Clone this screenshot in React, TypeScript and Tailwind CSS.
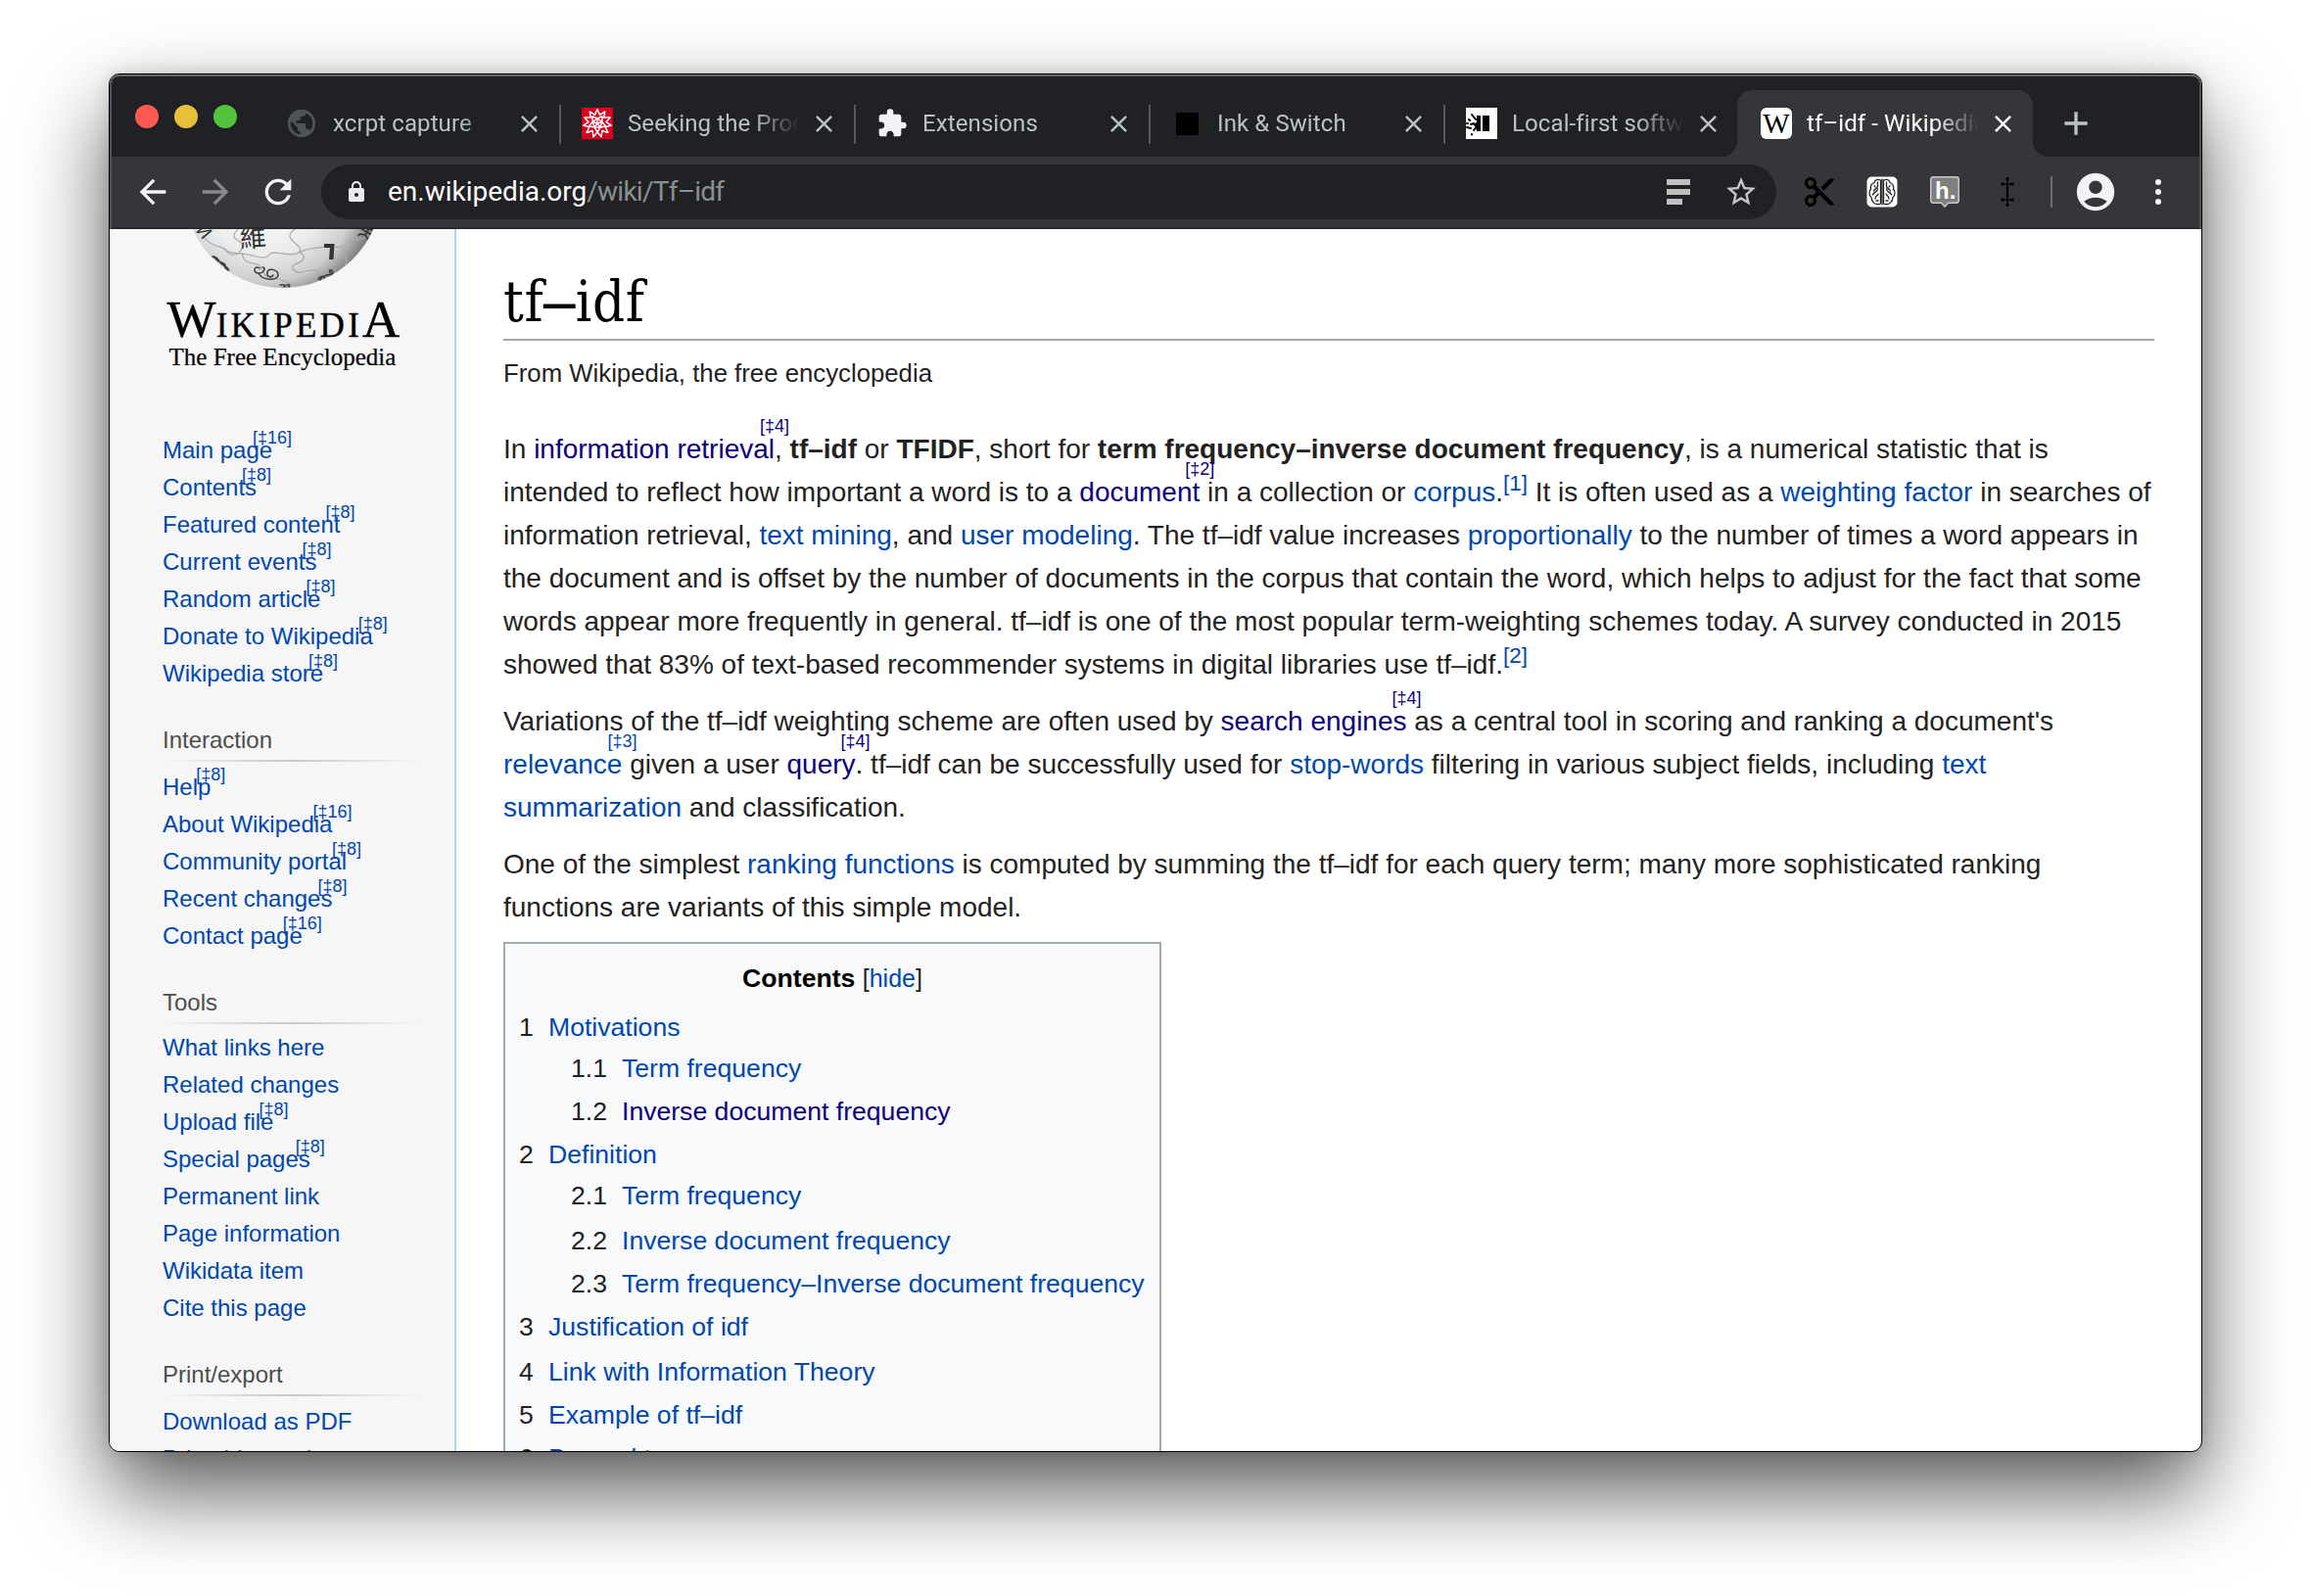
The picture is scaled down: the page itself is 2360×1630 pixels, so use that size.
import React from "react";
import {
  MdAccountCircle,
  MdAdd,
  MdArrowBack,
  MdArrowForward,
  MdClose,
  MdContentCut,
  MdExtension,
  MdLock,
  MdPublic,
  MdRefresh,
  MdStarBorder,
} from "react-icons/md";

/* ---------- favicons ---------- */

function polar(r: number, deg: number) {
  const a = ((deg - 90) * Math.PI) / 180;
  return [16 + r * Math.cos(a), 16 + r * Math.sin(a)];
}

function SpikeyIcon() {
  const star: string[] = [];
  const inner: string[] = [];
  const spokes: string[] = [];
  for (let i = 0; i < 11; i++) {
    const step = 360 / 11;
    const tip = polar(14.4, i * step);
    const dip = polar(9, i * step + step / 2);
    star.push(tip.join(","), dip.join(","));
  }
  for (let i = 0; i < 5; i++) {
    const a = polar(5, i * 72);
    const b = polar(9, i * 72 + 36);
    const c = polar(9, i * 72 - 36);
    inner.push(a.join(","));
    spokes.push(`M${c.join(" ")}L${a.join(" ")}L${b.join(" ")}M16 16L${a.join(" ")}`);
  }
  return (
    <svg width="32" height="32" viewBox="0 0 32 32">
      <rect width="32" height="32" fill="#d9001f" />
      <g fill="none" stroke="#fff" strokeWidth="1.5" strokeLinejoin="round">
        <polygon points={star.join(" ")} />
        <polygon points={inner.join(" ")} />
        <path d={spokes.join("")} />
      </g>
    </svg>
  );
}

function LocalFirstIcon() {
  return (
    <svg width="32" height="32" viewBox="0 0 32 32">
      <rect width="32" height="32" fill="#fff" />
      <path d="M17 8h7v16h-7z" fill="#000" />
      <path d="M11 8h4v16h-4l-1-4-3-3 4-2z" fill="#000" />
      <g stroke="#000" strokeWidth="2" strokeLinecap="round">
        <path d="M6 7l4 5M3 12l1 1M1 20l4 1M6 27l0 .5M8 23l3-4M1 16l1 0M5 17l3-1" />
      </g>
    </svg>
  );
}

function WikiIcon() {
  return (
    <div className="flex size-8 items-center justify-center overflow-hidden rounded-[6px] bg-white font-['Liberation_Serif',serif] text-[29px] leading-8 text-black">
      W
    </div>
  );
}

/* ---------- extension icons ---------- */

function BrainIcon() {
  return (
    <svg width="32" height="32" viewBox="0 0 32 32">
      <rect x="0.5" y="0.5" width="31" height="31" rx="5" fill="#fff" />
      <g fill="none" stroke="#222" strokeWidth="1.3" strokeLinecap="round">
        <path d="M16 3v26M14.5 4C10 2 8 5 8 6.500C4.500 8 4 11 4.500 13C2 16 3 20 5 21.500C5 26 9 29 12 28.500C14 29 14.500 28 14.500 27V4z" />
        <path d="M17.500 4C22 2 24 5 24 6.500C27.500 8 28 11 27.500 13C30 16 29 20 27 21.500C27 26 23 29 20 28.500C18 29 17.500 28 17.500 27V4z" />
        <path d="M11.500 6v4c0 3-3 2-4 5M11.500 13c0 3-4 3-5 6M9 23c0-3 2-3 3-5M10 25h2M8 9.500l1 1.500" />
        <path d="M20.500 6v4c0 3 3 2 4 5M20.500 13c0 3 4 3 5 6M23 23c0-3-2-3-3-5M22 25h-2M24 9.500l-1 1.500" />
      </g>
    </svg>
  );
}

function HypothesisIcon() {
  return (
    <div className="relative h-8 w-[30px]">
      <svg width="30" height="32" viewBox="0 0 30 32">
        <path
          d="M3 .75h24a2.250 2.250 0 0 1 2.250 2.250v22A2.250 2.250 0 0 1 27 27.250h-8.500L15 31l-3.500-3.750H3A2.250 2.250 0 0 1 .75 25V3A2.250 2.250 0 0 1 3 .75z"
          fill="#7f7f7f"
          stroke="#c9c9c9"
          strokeWidth="1.500"
        />
      </svg>
      <span className="absolute left-[5px] top-[3px] font-['Liberation_Sans',sans-serif] text-[24px] font-bold leading-6 text-white">
        h.
      </span>
    </div>
  );
}

function DaggerIcon() {
  return (
    <svg width="14" height="30" viewBox="0 0 14 30">
      <path d="M7 2v26M2 7h10M2 23h10" stroke="#000" strokeWidth="1.400" />
      <path d="M7 12v6" stroke="#000" strokeWidth="2" />
      <g fill="#000">
        <circle cx="7" cy="1.800" r="1.700" />
        <circle cx="7" cy="28.200" r="1.700" />
        <circle cx="1.900" cy="7" r="1.700" />
        <circle cx="12.100" cy="7" r="1.700" />
        <circle cx="1.900" cy="23" r="1.700" />
        <circle cx="12.100" cy="23" r="1.700" />
        <circle cx="7" cy="11" r="1.500" />
        <circle cx="7" cy="19" r="1.500" />
      </g>
    </svg>
  );
}

/* ---------- tab strip ---------- */

type TabData = { title: string; icon: React.ReactNode; active?: boolean };

const tabs: TabData[] = [
  { title: "xcrpt capture", icon: <MdPublic className="-ml-[2px] size-[34px] shrink-0 text-[#505459]" /> },
  { title: "Seeking the Productive Life", icon: <SpikeyIcon /> },
  { title: "Extensions", icon: <MdExtension className="size-8 text-[#f1f3f4]" /> },
  { title: "Ink & Switch", icon: <div className="size-[23px] bg-black" /> },
  { title: "Local-first software", icon: <LocalFirstIcon /> },
  { title: "tf–idf - Wikipedia", icon: <WikiIcon />, active: true },
];

function ActiveTabShape() {
  return (
    <svg className="absolute -left-[18px] top-0" width="334" height="68" viewBox="0 0 334 68">
      <path d="M0 68C9 68 16 61 16 52V16C16 7 23 0 32 0H302C311 0 318 7 318 16V52C318 61 325 68 334 68z" fill="#35363a" />
    </svg>
  );
}

function Tab({ tab, divider }: { tab: TabData; divider: boolean }) {
  return (
    <div className={`relative flex h-[68px] w-[301px] shrink-0 items-center ${tab.active ? "text-white" : "text-[#bdc1c6]"}`}>
      {tab.active && <ActiveTabShape />}
      <div className="relative ml-[22px] flex size-8 items-center justify-center">{tab.icon}</div>
      <div className="relative ml-[15px] w-[176px] overflow-hidden whitespace-nowrap text-[24px] leading-8 tracking-[0.1px] [mask-image:linear-gradient(to_right,black_128px,transparent_176px)]">
        {tab.title}
      </div>
      <MdClose className="relative ml-[10px] size-[29px]" />
      {divider && <div className="absolute -right-px top-[15px] h-10 w-[2px] bg-[#55585c]" />}
    </div>
  );
}

function TabStrip() {
  return (
    <div className="flex h-[84px] items-end bg-[#202124]">
      <div className="ml-[26px] mt-[31px] flex gap-4 self-start">
        <div className="size-6 rounded-full bg-[#ff5a52]" />
        <div className="size-6 rounded-full bg-[#e6c03a]" />
        <div className="size-6 rounded-full bg-[#53c33c]" />
      </div>
      <div className="ml-[29px] flex">
        {tabs.map((t, i) => (
          <Tab key={t.title} tab={t} divider={i < 4} />
        ))}
      </div>
      <div className="ml-[23px] flex h-[68px] items-center text-[#bdc1c6]">
        <MdAdd className="size-[40px]" />
      </div>
    </div>
  );
}

/* ---------- toolbar ---------- */

function Toolbar() {
  return (
    <div className="flex h-[74px] items-center border-b-2 border-[#29292c] bg-[#35363a]">
      <div className="ml-6 flex gap-6">
        <MdArrowBack className="size-10 text-[#f1f3f4]" />
        <MdArrowForward className="size-10 text-[#88898b]" />
        <MdRefresh className="size-10 text-[#f1f3f4]" />
      </div>
      <div className="ml-6 flex h-14 w-[1486px] items-center rounded-full bg-[#202124]">
        <MdLock className="ml-6 size-6 text-[#e8eaed]" />
        <div className="ml-[20px] text-[28px] leading-10 tracking-[-0.75px] text-[#8c8e91]">
          <span className="tracking-normal text-white">en.wikipedia.org</span>/wiki/Tf–idf
        </div>
        <div className="ml-auto flex w-6 flex-col gap-1">
          <div className="h-[6px] w-6 bg-[#bfbfbf]" />
          <div className="h-[6px] w-6 bg-[#bfbfbf]" />
          <div className="h-[6px] w-4 bg-[#bfbfbf]" />
        </div>
        <MdStarBorder className="ml-[34px] mr-[18px] size-9 text-[#c4c4c4]" />
      </div>
      <div className="ml-3 flex">
        <div className="flex w-16 items-center justify-center">
          <MdContentCut className="size-9 text-black" />
        </div>
        <div className="flex w-16 items-center justify-center">
          <BrainIcon />
        </div>
        <div className="flex w-16 items-center justify-center">
          <HypothesisIcon />
        </div>
        <div className="flex w-16 items-center justify-center">
          <DaggerIcon />
        </div>
      </div>
      <div className="ml-3 h-8 w-[2px] bg-[#6b6d70]" />
      <MdAccountCircle className="ml-[21px] size-[46px] text-[#f1f3f4]" />
      <div className="ml-[38px] flex flex-col gap-1">
        <div className="size-[6px] rounded-full bg-[#f1f3f4]" />
        <div className="size-[6px] rounded-full bg-[#f1f3f4]" />
        <div className="size-[6px] rounded-full bg-[#f1f3f4]" />
      </div>
    </div>
  );
}

/* ---------- sidebar ---------- */

function PuzzleGlobe() {
  return (
    <svg className="ml-[73px] block shrink-0" width="210" height="62" viewBox="0 0 210 62">
      <defs>
        <radialGradient id="globe" gradientUnits="userSpaceOnUse" cx="84" cy="-40" r="118">
          <stop offset="0" stopColor="#ffffff" />
          <stop offset="0.55" stopColor="#ebecec" />
          <stop offset="0.8" stopColor="#cbcdcf" />
          <stop offset="1" stopColor="#77797b" />
        </radialGradient>
        <clipPath id="ball">
          <circle cx="104" cy="-41" r="101" />
        </clipPath>
      </defs>
      <circle cx="104" cy="-41" r="101" fill="url(#globe)" />
      <g clipPath="url(#ball)">
        <g fill="none" stroke="#a7a9ab" strokeWidth="1.200">
          <path d="M22 6c8 14 20 10 24 16s12 6 16-2-10-8-8-14 4-4 4-6" />
          <path d="M44 20c6 6 14 4 24 6s18 6 22 0 22 4 30-2-14-12-8-20 14-6 14-4" />
          <path d="M120 24c12-6 18-4 26-6s18 4 24-4 16 0 22-8" />
          <path d="M122 24c8 6 0 10-6 12s0 10 8 8 16-6 16 4 8 6 14 6" />
          <path d="M62 24c2 12 10 10 16 12s4 14 16 14 12 8 26 6" />
          <path d="M168 18c-6 8 4 10 0 18s-12 8-16 12" />
        </g>
        <g fill="none" stroke="#3a3c3e" strokeWidth="1.500" strokeLinecap="round">
          <path d="M80 40c-6-4-7 5-1 5s8-6 4-6M79 45c4 8 20 8 20 2s-10-8-11-3 4 6 6 3" />
          <path d="M32 28c6-1 6 6 10 8s8 6 6 6-4-3-3-5-7-3-9-6-4-2-4-3" />
          <path d="M140 51c3-4 8-3 6 0s-6 1-3-1 8-4 10-3 3-4 0-5 -1 5 2 3" />
          <path d="M101 57h4c2 0 2 2 0 2M108 57c3-1 4 2 1 2" />
        </g>
        <g fill="#303234" className="font-['Noto_Sans_CJK_TC','Liberation_Sans',sans-serif]">
          <text x="60" y="18" fontSize="27" transform="rotate(-4 74 10)">
            維
          </text>
          <text x="12" y="6" fontSize="18" transform="rotate(50 18 6)">
            И
          </text>
          <text x="186" y="12" fontSize="18" transform="rotate(-60 190 8)">
            Ж
          </text>
        </g>
        <path d="M146 15h10.500l-1 16h-4.500l1-12h-6z" fill="#303234" />
      </g>
    </svg>
  );
}

type Item = [label: string, mark?: string];
type Section = { title: string; gap: string; items: Item[] };

const mainLinks: Item[] = [
  ["Main page", "[‡16]"],
  ["Contents", "[‡8]"],
  ["Featured content", "[‡8]"],
  ["Current events", "[‡8]"],
  ["Random article", "[‡8]"],
  ["Donate to Wikipedia", "[‡8]"],
  ["Wikipedia store", "[‡8]"],
];

const sections: Section[] = [
  {
    title: "Interaction",
    gap: "mt-[7px]",
    items: [
      ["Help", "[‡8]"],
      ["About Wikipedia", "[‡16]"],
      ["Community portal", "[‡8]"],
      ["Recent changes", "[‡8]"],
      ["Contact page", "[‡16]"],
    ],
  },
  {
    title: "Tools",
    gap: "mt-[5px]",
    items: [
      ["What links here"],
      ["Related changes"],
      ["Upload file", "[‡8]"],
      ["Special pages", "[‡8]"],
      ["Permanent link"],
      ["Page information"],
      ["Wikidata item"],
      ["Cite this page"],
    ],
  },
  {
    title: "Print/export",
    gap: "mt-[7px]",
    items: [["Download as PDF"], ["Printable version"]],
  },
];

function LinkList({ items }: { items: Item[] }) {
  return (
    <ul>
      {items.map(([label, mark]) => (
        <li key={label} className="flex h-[38px] leading-[38px]">
          <a className="relative text-[#0047ae]">
            {label}
            {mark && (
              <span className="absolute -top-[3px] left-full -translate-x-1/2 whitespace-nowrap text-[18px] leading-[18px]">
                {mark}
              </span>
            )}
          </a>
        </li>
      ))}
    </ul>
  );
}

function Sidebar() {
  return (
    <aside className="flex w-[354px] shrink-0 flex-col border-r-2 border-[#a7d7f9] bg-[#f6f6f6] text-[24px]">
      <PuzzleGlobe />
      <div className="mt-[6px] flex h-[47px] shrink-0 items-baseline justify-center whitespace-nowrap pl-[3px] font-['Liberation_Serif',serif] leading-[48px] text-black [-webkit-text-stroke:0.4px_black]">
        <span className="text-[53px]">W</span>
        <span className="text-[35px] tracking-[3.3px]">IKIPEDI</span>
        <span className="text-[53px]">A</span>
      </div>
      <div className="shrink-0 pl-px text-center font-['Liberation_Serif',serif] text-[25px] leading-8 text-black [-webkit-text-stroke:0.2px_black]">
        The Free Encyclopedia
      </div>
      <nav className="mt-[60px] pl-[54px]">
        <LinkList items={mainLinks} />
        {sections.map((s) => (
          <section key={s.title} className="mt-[30px]">
            <h3 className="leading-[38px] text-[#4d4d4d]">{s.title}</h3>
            <div className="mt-px h-[2px] w-[264px] bg-linear-to-r from-[#f6f6f6] via-[#c3c8ce] to-[#f6f6f6]" />
            <div className={s.gap}>
              <LinkList items={s.items} />
            </div>
          </section>
        ))}
      </nav>
    </aside>
  );
}

/* ---------- article ---------- */

function A({ children, seen, mark }: { children: React.ReactNode; seen?: boolean; mark?: string }) {
  return (
    <a className={`relative ${seen ? "text-[#0b0080]" : "text-[#0047ae]"}`}>
      {children}
      {mark && (
        <span className="absolute -top-[17px] left-full -translate-x-1/2 whitespace-nowrap text-[18px] font-normal leading-[18px]">
          {mark}
        </span>
      )}
    </a>
  );
}

function Ref({ n }: { n: number }) {
  return <span className="relative -top-[11px] text-[22.4px] leading-none text-[#0047ae]">[{n}]</span>;
}

type TocRow = { no: string; text: string; h: string; sub?: boolean; seen?: boolean };

const toc: TocRow[] = [
  { no: "1", text: "Motivations", h: "h-[42px]" },
  { no: "1.1", text: "Term frequency", h: "h-[44px]", sub: true },
  { no: "1.2", text: "Inverse document frequency", h: "h-[44px]", sub: true, seen: true },
  { no: "2", text: "Definition", h: "h-[42px]" },
  { no: "2.1", text: "Term frequency", h: "h-[46px]", sub: true },
  { no: "2.2", text: "Inverse document frequency", h: "h-[44px]", sub: true },
  { no: "2.3", text: "Term frequency–Inverse document frequency", h: "h-[44px]", sub: true },
  { no: "3", text: "Justification of idf", h: "h-[46px]" },
  { no: "4", text: "Link with Information Theory", h: "h-[44px]" },
  { no: "5", text: "Example of tf–idf", h: "h-[44px]" },
  { no: "6", text: "Beyond terms", h: "h-[44px]" },
];

function Article() {
  return (
    <main className="w-[1734px] shrink-0 whitespace-nowrap pl-12 pt-10 text-[28px] leading-[44px] text-[#222222]">
      <h1 className="h-[74px] border-b-2 border-[#a2a9b1] font-['DejaVu_Serif',serif] text-[57.6px] leading-[70px] tracking-[0.6px] text-black [font-stretch:condensed]">
        tf<span className="font-['Liberation_Serif',serif] text-[64px] font-bold leading-none">–</span>idf
      </h1>
      <div className="mt-[13px] text-[25.76px] leading-10">From Wikipedia, the free encyclopedia</div>
      <p className="mt-[36px]">
        In <A seen mark="[‡4]">information retrieval</A>, <b>tf–idf</b> or <b>TFIDF</b>, short for{" "}
        <b>term frequency–inverse document frequency</b>, is a numerical statistic that is
        <br />
        intended to reflect how important a word is to a <A seen mark="[‡2]">document</A> in a collection or{" "}
        <A>corpus</A>.<Ref n={1} /> It is often used as a <A>weighting factor</A> in searches of
        <br />
        information retrieval, <A>text mining</A>, and <A>user modeling</A>. The tf–idf value increases{" "}
        <A>proportionally</A> to the number of times a word appears in
        <br />
        the document and is offset by the number of documents in the corpus that contain the word, which helps to
        adjust for the fact that some
        <br />
        words appear more frequently in general. tf–idf is one of the most popular term-weighting schemes today. A
        survey conducted in 2015
        <br />
        showed that 83% of text-based recommender systems in digital libraries use tf–idf.
        <Ref n={2} />
      </p>
      <p className="mt-[14px]">
        Variations of the tf–idf weighting scheme are often used by <A seen mark="[‡4]">search engines</A> as a central
        tool in scoring and ranking a document's
        <br />
        <A mark="[‡3]">relevance</A> given a user <A seen mark="[‡4]">query</A>. tf–idf can be successfully used for{" "}
        <A>stop-words</A> filtering in various subject fields, including <A>text</A>
        <br />
        <A>summarization</A> and classification.
      </p>
      <p className="mt-[14px]">
        One of the simplest <A>ranking functions</A> is computed by summing the tf–idf for each query term; many more
        sophisticated ranking
        <br />
        functions are variants of this simple model.
      </p>
      <div className="mt-[13px] w-[672px] border-2 border-[#a2a9b1] bg-[#f8f9fa] pt-[13px] text-[26.6px]">
        <div className="text-center">
          <b className="text-black">Contents</b> <span className="text-[25px]">[<A>hide</A>]</span>
        </div>
        <ul className="mt-[6px]">
          {toc.map((r) => (
            <li key={r.no} className={`flex ${r.h} ${r.sub ? "pl-[67px]" : "pl-[14px]"}`}>
              <span className={r.sub ? "w-[52px]" : "w-[30px]"}>{r.no}</span>
              <A seen={r.seen}>{r.text}</A>
            </li>
          ))}
        </ul>
      </div>
    </main>
  );
}

export default function App() {
  return (
    <div className="h-[1630px] w-[2360px] overflow-hidden bg-white pl-[111px] pt-[75px] font-['Roboto',sans-serif]">
      <div className="relative h-[1408px] w-[2138px] overflow-hidden rounded-[11px] border border-black bg-white shadow-[0_40px_88px_rgba(0,0,0,0.66),0_0_16px_rgba(0,0,0,0.15)]">
        <TabStrip />
        <Toolbar />
        <div className="flex h-[1248px] overflow-hidden font-['Liberation_Sans',Arial,sans-serif]">
          <Sidebar />
          <Article />
        </div>
        <div className="pointer-events-none absolute inset-x-0 top-0 h-[158px] rounded-t-[10px] shadow-[inset_0_2px_0_#646866,inset_2px_0_0_#505155,inset_-2px_0_0_#505155]" />
      </div>
    </div>
  );
}
